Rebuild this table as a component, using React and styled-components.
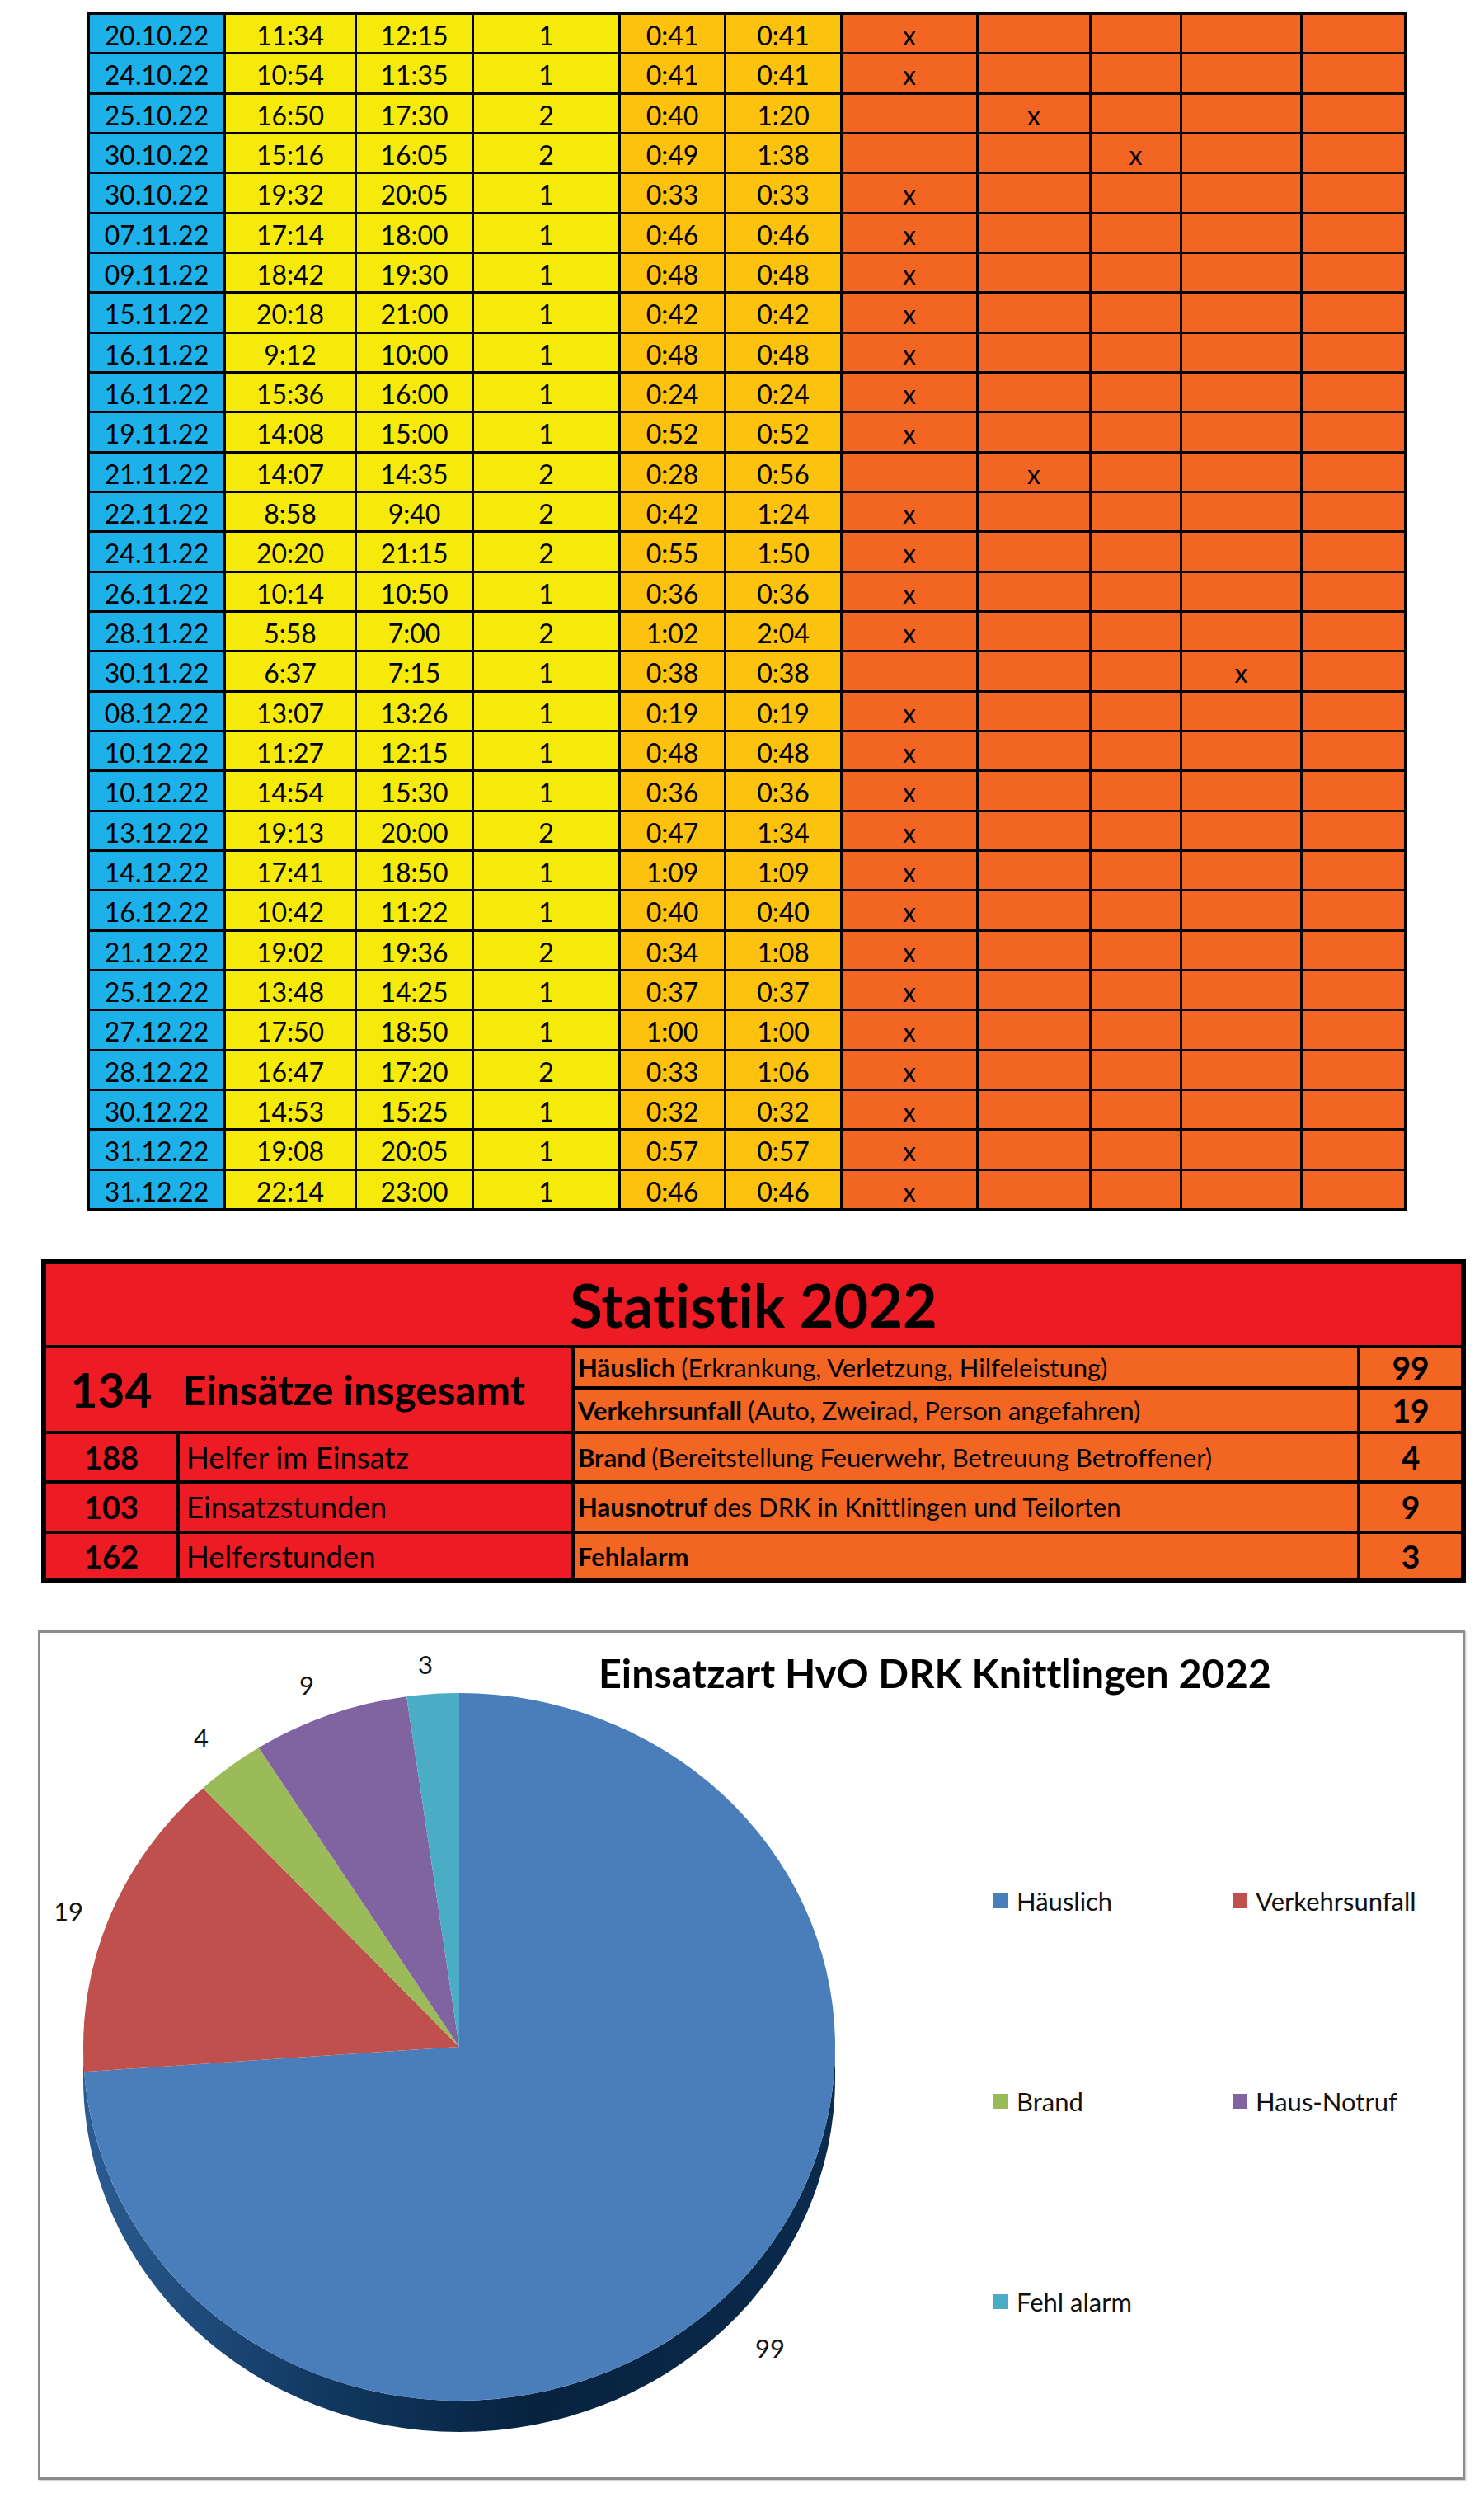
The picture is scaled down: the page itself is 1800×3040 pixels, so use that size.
import React from "react";
import styled, { createGlobalStyle } from "styled-components";

const GlobalStyle = createGlobalStyle`
  body {
    margin: 0;
    background: #ffffff;
    font-family: Lato, "Open Sans", sans-serif;
    font-variant-ligatures: none;
    color: #000000;
  }
`;

// Einsätze: Datum, Beginn, Ende, Helfer, Dauer, Helferstunden, Spalte des x
const rows = [
  ["20.10.22", "11:34", "12:15", "1", "0:41", "0:41", 0],
  ["24.10.22", "10:54", "11:35", "1", "0:41", "0:41", 0],
  ["25.10.22", "16:50", "17:30", "2", "0:40", "1:20", 1],
  ["30.10.22", "15:16", "16:05", "2", "0:49", "1:38", 2],
  ["30.10.22", "19:32", "20:05", "1", "0:33", "0:33", 0],
  ["07.11.22", "17:14", "18:00", "1", "0:46", "0:46", 0],
  ["09.11.22", "18:42", "19:30", "1", "0:48", "0:48", 0],
  ["15.11.22", "20:18", "21:00", "1", "0:42", "0:42", 0],
  ["16.11.22", "9:12", "10:00", "1", "0:48", "0:48", 0],
  ["16.11.22", "15:36", "16:00", "1", "0:24", "0:24", 0],
  ["19.11.22", "14:08", "15:00", "1", "0:52", "0:52", 0],
  ["21.11.22", "14:07", "14:35", "2", "0:28", "0:56", 1],
  ["22.11.22", "8:58", "9:40", "2", "0:42", "1:24", 0],
  ["24.11.22", "20:20", "21:15", "2", "0:55", "1:50", 0],
  ["26.11.22", "10:14", "10:50", "1", "0:36", "0:36", 0],
  ["28.11.22", "5:58", "7:00", "2", "1:02", "2:04", 0],
  ["30.11.22", "6:37", "7:15", "1", "0:38", "0:38", 3],
  ["08.12.22", "13:07", "13:26", "1", "0:19", "0:19", 0],
  ["10.12.22", "11:27", "12:15", "1", "0:48", "0:48", 0],
  ["10.12.22", "14:54", "15:30", "1", "0:36", "0:36", 0],
  ["13.12.22", "19:13", "20:00", "2", "0:47", "1:34", 0],
  ["14.12.22", "17:41", "18:50", "1", "1:09", "1:09", 0],
  ["16.12.22", "10:42", "11:22", "1", "0:40", "0:40", 0],
  ["21.12.22", "19:02", "19:36", "2", "0:34", "1:08", 0],
  ["25.12.22", "13:48", "14:25", "1", "0:37", "0:37", 0],
  ["27.12.22", "17:50", "18:50", "1", "1:00", "1:00", 0],
  ["28.12.22", "16:47", "17:20", "2", "0:33", "1:06", 0],
  ["30.12.22", "14:53", "15:25", "1", "0:32", "0:32", 0],
  ["31.12.22", "19:08", "20:05", "1", "0:57", "0:57", 0],
  ["31.12.22", "22:14", "23:00", "1", "0:46", "0:46", 0],
];

const colWidths = [162, 156, 139, 175, 125, 138, 162, 134, 107, 143, 123];
const colColors = [
  "#1cb1e9",
  "#f6ea0a",
  "#f6ea0a",
  "#f6ea0a",
  "#fcc20e",
  "#fcc20e",
  "#f26522",
  "#f26522",
  "#f26522",
  "#f26522",
  "#f26522",
];

const kinds = [
  { name: "Häuslich", value: 99, color: "#4a7ebb" },
  { name: "Verkehrsunfall", value: 19, color: "#c0504d" },
  { name: "Brand", value: 4, color: "#9bbb59" },
  { name: "Haus-Notruf", value: 9, color: "#8064a2" },
  { name: "Fehl alarm", value: 3, color: "#4bacc6" },
];

// Styled Components
const Page = styled.div`
  display: flex;
  flex-direction: column;
  align-items: flex-start;
  width: 1800px;
  min-height: 3040px;
`;

const LogTable = styled.div`
  display: grid;
  grid-template-columns: ${colWidths.map((w) => `${w}px`).join(" ")};
  grid-auto-rows: 45.33px;
  gap: 3px;
  padding: 3px;
  margin: 15px 0 0 106px;
  background: #000000;
`;

const LogCell = styled.div`
  display: flex;
  align-items: center;
  justify-content: center;
  padding-top: 5px;
  box-sizing: border-box;
  background: ${(p) => p.$bg};
  font-size: 32px;
  line-height: 1;
`;

const Stats = styled.div`
  display: grid;
  grid-template-columns: 158px 475px 949px 122px;
  grid-template-rows: 98px 46px 50px 56px 57px 54px;
  gap: 4px;
  width: 1728px;
  box-sizing: border-box;
  margin: 59px 0 0 50px;
  border: 6px solid #000000;
  background: #000000;
`;

const StatsTitle = styled.div`
  grid-column: 1 / -1;
  display: flex;
  align-items: center;
  justify-content: center;
  background: #ed1c24;
  font-size: 72px;
  font-weight: 700;
`;

const TotalCell = styled.div`
  grid-column: 1 / 3;
  grid-row: span 2;
  display: flex;
  align-items: center;
  background: #ed1c24;
  font-weight: 700;
`;

const TotalNumber = styled.span`
  width: 158px;
  text-align: center;
  font-size: 57px;
`;

const TotalLabel = styled.span`
  padding-left: 8px;
  font-size: 49.5px;
`;

const RedNum = styled.div`
  display: flex;
  align-items: center;
  justify-content: center;
  background: #ed1c24;
  font-size: 38px;
  font-weight: 700;
`;

const RedLabel = styled.div`
  display: flex;
  align-items: center;
  padding-left: 8px;
  background: #ed1c24;
  font-size: 36.5px;
`;

const KindLabel = styled.div`
  display: flex;
  align-items: center;
  padding-left: 4px;
  background: #f26522;
  font-size: 31px;
  white-space: nowrap;

  b {
    font-weight: 700;
    margin-right: 7px;
  }
`;

const KindNum = styled.div`
  display: flex;
  align-items: center;
  justify-content: center;
  background: #f26522;
  font-size: 39px;
  font-weight: 700;
`;

const Chart = styled.div`
  display: grid;
  grid-template-columns: 677px 374px 1fr;
  grid-template-rows: 90px 1fr;
  width: 1731px;
  height: 1030px;
  box-sizing: border-box;
  margin: 57px 0 0 46px;
  border: 3px solid #8c8c8c;
  box-shadow: 1px 1px 2px rgba(0, 0, 0, 0.25);
  background: #ffffff;
`;

const PieArea = styled.svg`
  grid-column: 1 / 3;
  grid-row: 1 / 3;
  display: block;
`;

const ChartTitle = styled.div`
  grid-column: 2 / 4;
  grid-row: 1;
  padding-top: 24px;
  font-size: 48.5px;
  font-weight: 700;
  line-height: 1;
  white-space: nowrap;
`;

const Legend = styled.div`
  grid-column: 3;
  grid-row: 2;
  display: grid;
  grid-template-columns: 290px auto;
  grid-auto-rows: 34px;
  row-gap: 209px;
  align-content: start;
  padding: 218px 0 0 105px;
`;

const LegendItem = styled.div`
  display: flex;
  align-items: center;
  gap: 10px;
  font-size: 31px;
  color: #111111;
`;

const Swatch = styled.span`
  width: 18px;
  height: 18px;
  background: ${(p) => p.$color};
`;

// pie geometry, in svg coordinates
const cx = 508;
const cy = 502;
const rx = 456;
const ry = 429;
const depth = 38;

const point = (a) => [cx + rx * Math.sin(a), cy - ry * Math.cos(a)];

const slicePath = (a1, a2) => {
  const [x1, y1] = point(a1);
  const [x2, y2] = point(a2);
  const large = a2 - a1 > Math.PI ? 1 : 0;
  return `M ${cx} ${cy} L ${x1} ${y1} A ${rx} ${ry} 0 ${large} 1 ${x2} ${y2} Z`;
};

const sidePath = `M ${cx - rx} ${cy} A ${rx} ${ry} 0 0 0 ${cx + rx} ${cy} L ${cx + rx} ${
  cy + depth
} A ${rx} ${ry} 0 0 1 ${cx - rx} ${cy + depth} Z`;

const pieLabels = [
  { text: "99", x: 885, y: 867 },
  { text: "19", x: 34, y: 337 },
  { text: "4", x: 195, y: 127 },
  { text: "9", x: 323, y: 63 },
  { text: "3", x: 467, y: 38 },
];

const Pie = () => {
  const total = kinds.reduce((s, k) => s + k.value, 0);
  let start = 0;
  const slices = kinds.map((k) => {
    const end = start + (k.value / total) * Math.PI * 2;
    const d = slicePath(start, end);
    start = end;
    return <path key={k.name} d={d} fill={k.color} />;
  });

  return (
    <PieArea width="1051" height="1024" viewBox="0 0 1051 1024">
      <defs>
        <linearGradient id="side" x1="0" y1="0" x2="1" y2="0">
          <stop offset="0" stopColor="#2b5c92" />
          <stop offset="0.3" stopColor="#123a63" />
          <stop offset="0.6" stopColor="#06223f" />
          <stop offset="1" stopColor="#0b2b4d" />
        </linearGradient>
      </defs>
      <path d={sidePath} fill="url(#side)" />
      {slices}
      {pieLabels.map((l) => (
        <text
          key={l.text}
          x={l.x}
          y={l.y}
          textAnchor="middle"
          dominantBaseline="central"
          fontFamily="Lato, sans-serif"
          fontSize="31"
          fill="#111"
        >
          {l.text}
        </text>
      ))}
    </PieArea>
  );
};

const App = () => {
  return (
    <Page>
      <GlobalStyle />

      <LogTable>
        {rows.map((r, i) =>
          colWidths.map((_, c) => {
            let text = "";
            if (c < 6) text = r[c];
            else if (c - 6 === r[6]) text = "x";
            return (
              <LogCell key={`${i}-${c}`} $bg={colColors[c]}>
                {text}
              </LogCell>
            );
          })
        )}
      </LogTable>

      <Stats>
        <StatsTitle>Statistik 2022</StatsTitle>
        <TotalCell>
          <TotalNumber>134</TotalNumber>
          <TotalLabel>Einsätze insgesamt</TotalLabel>
        </TotalCell>
        <KindLabel>
          <b>Häuslich</b>(Erkrankung, Verletzung, Hilfeleistung)
        </KindLabel>
        <KindNum>99</KindNum>
        <KindLabel>
          <b>Verkehrsunfall</b>(Auto, Zweirad, Person angefahren)
        </KindLabel>
        <KindNum>19</KindNum>

        <RedNum>188</RedNum>
        <RedLabel>Helfer im Einsatz</RedLabel>
        <KindLabel>
          <b>Brand</b>(Bereitstellung Feuerwehr, Betreuung Betroffener)
        </KindLabel>
        <KindNum>4</KindNum>

        <RedNum>103</RedNum>
        <RedLabel>Einsatzstunden</RedLabel>
        <KindLabel>
          <b>Hausnotruf</b>des DRK in Knittlingen und Teilorten
        </KindLabel>
        <KindNum>9</KindNum>

        <RedNum>162</RedNum>
        <RedLabel>Helferstunden</RedLabel>
        <KindLabel>
          <b>Fehlalarm</b>
        </KindLabel>
        <KindNum>3</KindNum>
      </Stats>

      <Chart>
        <Pie />
        <ChartTitle>Einsatzart HvO DRK Knittlingen 2022</ChartTitle>
        <Legend>
          {kinds.map((k) => (
            <LegendItem key={k.name}>
              <Swatch $color={k.color} />
              {k.name}
            </LegendItem>
          ))}
        </Legend>
      </Chart>
    </Page>
  );
};

export default App;
